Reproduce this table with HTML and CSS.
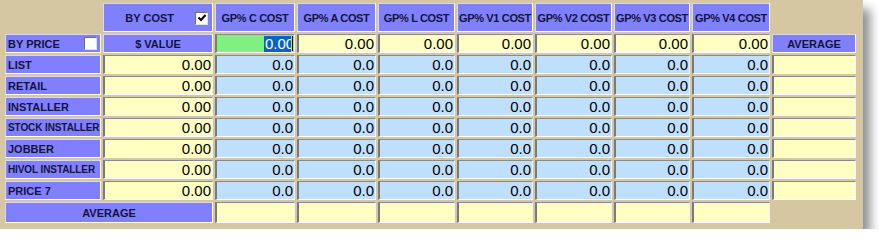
FILE: index.html
```html
<!DOCTYPE html>
<html>
<head>
<meta charset="utf-8">
<link rel="stylesheet" href="styles.css">
</head>
<body>
<div class="panel">
  <div class="grid">
    <div class="blank"></div>
    <div class="lbl head bycost"><span>BY COST</span><span class="chk"><svg width="10" height="10" viewBox="0 0 10 10"><path d="M1.5 4.5 L4 7 L8.5 2" fill="none" stroke="#000" stroke-width="2"/></svg></span></div>
    <div class="lbl head">GP% C COST</div>
    <div class="lbl head">GP% A COST</div>
    <div class="lbl head">GP% L COST</div>
    <div class="lbl head">GP% V1 COST</div>
    <div class="lbl head">GP% V2 COST</div>
    <div class="lbl head">GP% V3 COST</div>
    <div class="lbl head">GP% V4 COST</div>
    <div class="blank"></div>

    <div class="lbl row byprice"><span>BY PRICE</span><span class="chk"></span></div>
    <div class="lbl center">$ VALUE</div>
    <div class="in green"><span class="selbox"><span class="sel">0.00</span></span><span class="caret"></span></div>
    <div class="in yel">0.00</div>
    <div class="in yel">0.00</div>
    <div class="in yel">0.00</div>
    <div class="in yel">0.00</div>
    <div class="in yel">0.00</div>
    <div class="in yel">0.00</div>
    <div class="lbl center">AVERAGE</div>

    <div class="lbl row">LIST</div>
    <div class="in yel">0.00</div>
    <div class="in blu">0.0</div><div class="in blu">0.0</div><div class="in blu">0.0</div><div class="in blu">0.0</div><div class="in blu">0.0</div><div class="in blu">0.0</div><div class="in blu">0.0</div>
    <div class="in yel"></div>

    <div class="lbl row">RETAIL</div>
    <div class="in yel">0.00</div>
    <div class="in blu">0.0</div><div class="in blu">0.0</div><div class="in blu">0.0</div><div class="in blu">0.0</div><div class="in blu">0.0</div><div class="in blu">0.0</div><div class="in blu">0.0</div>
    <div class="in yel"></div>

    <div class="lbl row">INSTALLER</div>
    <div class="in yel">0.00</div>
    <div class="in blu">0.0</div><div class="in blu">0.0</div><div class="in blu">0.0</div><div class="in blu">0.0</div><div class="in blu">0.0</div><div class="in blu">0.0</div><div class="in blu">0.0</div>
    <div class="in yel"></div>

    <div class="lbl row small">STOCK INSTALLER</div>
    <div class="in yel">0.00</div>
    <div class="in blu">0.0</div><div class="in blu">0.0</div><div class="in blu">0.0</div><div class="in blu">0.0</div><div class="in blu">0.0</div><div class="in blu">0.0</div><div class="in blu">0.0</div>
    <div class="in yel"></div>

    <div class="lbl row">JOBBER</div>
    <div class="in yel">0.00</div>
    <div class="in blu">0.0</div><div class="in blu">0.0</div><div class="in blu">0.0</div><div class="in blu">0.0</div><div class="in blu">0.0</div><div class="in blu">0.0</div><div class="in blu">0.0</div>
    <div class="in yel"></div>

    <div class="lbl row small">HIVOL INSTALLER</div>
    <div class="in yel">0.00</div>
    <div class="in blu">0.0</div><div class="in blu">0.0</div><div class="in blu">0.0</div><div class="in blu">0.0</div><div class="in blu">0.0</div><div class="in blu">0.0</div><div class="in blu">0.0</div>
    <div class="in yel"></div>

    <div class="lbl row">PRICE 7</div>
    <div class="in yel">0.00</div>
    <div class="in blu">0.0</div><div class="in blu">0.0</div><div class="in blu">0.0</div><div class="in blu">0.0</div><div class="in blu">0.0</div><div class="in blu">0.0</div><div class="in blu">0.0</div>
    <div class="in yel"></div>

    <div class="lbl center avg">AVERAGE</div>
    <div class="in yel"></div><div class="in yel"></div><div class="in yel"></div><div class="in yel"></div><div class="in yel"></div><div class="in yel"></div><div class="in yel"></div>
    <div class="blank"></div>
  </div>
</div>
</body>
</html>
```

FILE: styles.css
```css
html, body {
  margin: 0;
  padding: 0;
  background: #ffffff;
}
.panel {
  width: 863px;
  height: 229px;
  box-sizing: border-box;
  padding: 3px 0 0 5px;
  background: #d5c7a1;
  box-shadow: 7px 9px 10px rgba(0, 0, 0, 0.45);
}
.grid {
  display: grid;
  grid-template-columns: 96px 110px 80px 79px 77px 76px 77px 76px 78px 84px;
  grid-template-rows: 29px repeat(8, 19px) 21px;
  column-gap: 2px;
  row-gap: 2px;
}
.grid > div {
  box-sizing: border-box;
  overflow: hidden;
  white-space: nowrap;
}
.lbl {
  background: #8080ff;
  color: #14143a;
  font-family: "Liberation Sans", Arial, sans-serif;
  font-weight: bold;
  font-size: 11px;
  border-top: 1px solid #d8d8f0;
  border-left: 1px solid #d8d8f0;
  border-bottom: 1px solid #ffffff;
  border-right: 1px solid #ffffff;
  display: flex;
  align-items: center;
}
.head {
  justify-content: center;
  padding-top: 1px;
  letter-spacing: -0.35px;
}
.bycost {
  justify-content: flex-end;
  padding-right: 4px;
  letter-spacing: 0;
}
.bycost span:first-child {
  margin-right: 21px;
}
.row {
  padding-left: 2px;
}
.small {
  font-size: 10px;
  letter-spacing: -0.1px;
}
.byprice {
  justify-content: space-between;
  padding-right: 3px;
}
.center {
  justify-content: center;
}
.avg {
  grid-column: span 2;
}
.chk {
  width: 13px;
  height: 13px;
  box-sizing: border-box;
  background: #ffffff;
  border-top: 1px solid #707070;
  border-left: 1px solid #707070;
  border-bottom: 1px solid #e0e0e0;
  border-right: 1px solid #e0e0e0;
  display: flex;
  align-items: center;
  justify-content: center;
}
.in {
  font-family: "Liberation Sans", Arial, sans-serif;
  font-size: 15px;
  color: #000000;
  line-height: 16px;
  padding-right: 1px;
  border-top: 1px solid #8a8a8a;
  border-left: 2px solid #7a7a7a;
  border-bottom: 1px solid #ffffff;
  border-right: 1px solid #f4f4f4;
  display: flex;
  align-items: center;
  justify-content: flex-end;
}
.yel {
  background: #ffffc4;
}
.blu {
  background: #bfdfff;
}
.green {
  background: #80f080;
  padding-right: 0;
}
.selbox {
  width: 27px;
  overflow: hidden;
  display: flex;
  justify-content: flex-start;
  background: #0a62c8;
}
.sel {
  color: #ffffff;
  padding-left: 1px;
}
.caret {
  width: 1px;
  height: 15px;
  background: #000;
  flex: none;
  margin-left: 1px;
  margin-right: 1px;
}
.blank {
  background: transparent;
}
```
